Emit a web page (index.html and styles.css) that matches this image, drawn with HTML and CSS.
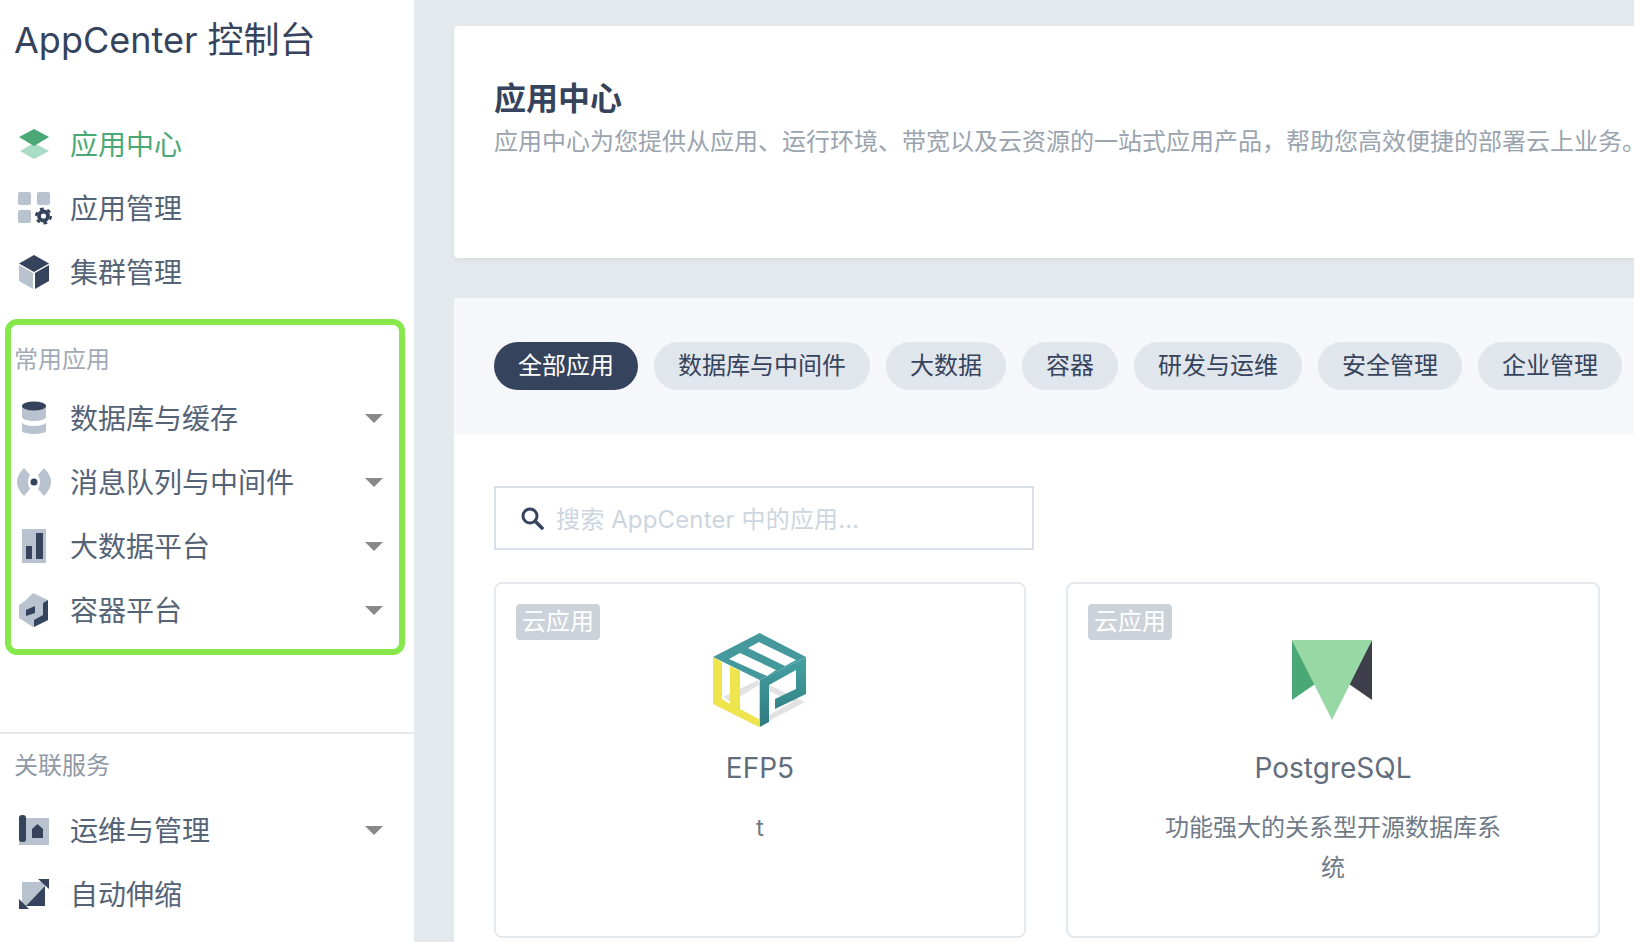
FILE: index.html
```html
<!DOCTYPE html>
<html lang="zh-CN">
<head>
    <meta charset="UTF-8">
    <title>AppCenter 控制台</title>
    <link rel="stylesheet" href="styles.css">
</head>
<body>

    <!-- Sidebar -->
    <aside class="sidebar">
        <h1 class="brand">AppCenter 控制台</h1>

        <nav class="nav-top">
            <a class="item active">
                <svg class="ico" viewBox="0 0 32 32"><path fill="#a8dcc4" d="M2 23 16 15 31 23 16 31z"/><path fill="#4aa876" d="M1 9 16 1 31 9 16 18z"/></svg>
                <span>应用中心</span>
            </a>
            <a class="item">
                <svg class="ico" viewBox="0 0 32 32"><rect width="13" height="13" rx="2" fill="#b8c3cf"/><rect x="19" width="13" height="13" rx="2" fill="#b8c3cf"/><rect y="18" width="13" height="13" rx="2" fill="#b8c3cf"/><circle cx="25.5" cy="24" r="4.5" fill="none" stroke="#36435c" stroke-width="3.8"/><circle cx="25.5" cy="24" r="7.300" fill="none" stroke="#36435c" stroke-width="2.400" stroke-dasharray="3.800 3.840"/></svg>
                <span>应用管理</span>
            </a>
            <a class="item">
                <svg class="ico" viewBox="0 0 32 32"><path fill="#36435c" d="M16-1 31 7.5 16 16 1 7.5z"/><path fill="#b8c3cf" d="M1 9 15 17V33L1 25z"/><path fill="#36435c" d="M17 17 31 9V25L17 33z"/></svg>
                <span>集群管理</span>
            </a>
        </nav>

        <section class="group-hl">
            <div class="label">常用应用</div>
            <a class="item">
                <svg class="ico" viewBox="0 0 32 32"><path fill="#b8c3cf" d="M4 4V15A12 4 0 0 0 28 15V4z"/><ellipse cx="16" cy="4" rx="12" ry="4.500" fill="#36435c"/><path fill="#b8c3cf" d="M4 20A12 4 0 0 0 28 20V29A12 3 0 0 1 4 29z"/></svg>
                <span>数据库与缓存</span><i class="caret"></i>
            </a>
            <a class="item">
                <svg class="ico" viewBox="0 0 32 32"><path fill="#b8c3cf" d="M6 2Q-8 16 6 30L12 23Q8 16 12 9z"/><path fill="#b8c3cf" d="M26 2Q40 16 26 30L20 23Q24 16 20 9z"/><circle cx="16" cy="16" r="3.5" fill="#36435c"/></svg>
                <span>消息队列与中间件</span><i class="caret"></i>
            </a>
            <a class="item">
                <svg class="ico" viewBox="0 0 32 32"><rect x="4" y="-1" width="24" height="34" fill="#b8c3cf"/><rect x="8" y="16" width="6" height="13" fill="#36435c"/><rect x="18" y="3" width="7" height="26" fill="#36435c"/></svg>
                <span>大数据平台</span><i class="caret"></i>
            </a>
            <a class="item">
                <svg class="ico" viewBox="0 0 32 32"><path fill="#b8c3cf" d="M1 11 7 7 15-1 30 6V26L15 33 1 24z"/><path fill="#36435c" d="M30 6 25 9V21L16 26V33L30 26z"/><path fill="#36435c" d="M8 16 17 12V19L8 22z"/></svg>
                <span>容器平台</span><i class="caret"></i>
            </a>
        </section>

        <section class="group-rel">
            <div class="label rel">关联服务</div>
            <a class="item">
                <svg class="ico" viewBox="0 0 32 32"><rect x="1" y="4" width="30" height="27" fill="#b8c3cf"/><rect x="1" y="1" width="7" height="27" rx="3" fill="#36435c"/><path fill="#36435c" d="M14 15 19.500 10 25 15V24H14z"/></svg>
                <span>运维与管理</span><i class="caret"></i>
            </a>
            <a class="item">
                <svg class="ico" viewBox="0 0 32 32"><rect x="4" y="4" width="23" height="24" fill="#b8c3cf"/><path fill="#36435c" d="M27 8V28H8z"/><path fill="#36435c" d="M20 1H31V11z"/><path fill="#36435c" d="M1 21V31H11z"/></svg>
                <span>自动伸缩</span>
            </a>
        </section>
    </aside>

    <!-- Main -->
    <main class="main">
        <div class="head-card">
            <h2>应用中心</h2>
            <p>应用中心为您提供从应用、运行环境、带宽以及云资源的一站式应用产品&#xFF0C;帮助您高效便捷的部署云上业务。</p>
        </div>

        <div class="panel">
            <div class="filters">
                <span class="pill on">全部应用</span>
                <span class="pill">数据库与中间件</span>
                <span class="pill">大数据</span>
                <span class="pill">容器</span>
                <span class="pill">研发与运维</span>
                <span class="pill">安全管理</span>
                <span class="pill">企业管理</span>
            </div>

            <div class="content">
                <div class="search">
                    <svg class="search-ico" viewBox="0 0 24 24"><circle cx="10" cy="10" r="7" fill="none" stroke="#36435c" stroke-width="3"/><path d="M15 15 22 22" stroke="#36435c" stroke-width="3.600" stroke-linecap="round"/></svg>
                    <input type="text" placeholder="搜索 AppCenter 中的应用...">
                </div>

                <div class="cards">
                    <div class="card">
                        <span class="tag">云应用</span>
                        <svg class="logo-efp" viewBox="0 0 94 94">
                            <defs><linearGradient id="teal" x1="0" y1="0" x2="0" y2="1"><stop offset="0" stop-color="#46a2a3"/><stop offset="1" stop-color="#2e7a80"/></linearGradient></defs>
                            <path fill="#e2e2e2" d="M10 64 45 47 46 52 18 69zM56 52 92 69 56 88V82L80 69 56 58z"/>
                            <path fill="#45999c" fill-rule="evenodd" d="M46.700 0 93 24 46.700 47 0 24zM35 15 46 9 83 27 72 33zM16 26 27 20 63 37 54 43z"/>
                            <path fill="url(#teal)" d="M46.700 47 93 24V61L62 76V66L83 56V37L56 52V89L46.700 94z"/>
                            <path fill="#eee44e" d="M0 24 9 29V66L17 71V33L27 38V76L46 86V94L0 71z"/>
                        </svg>
                        <div class="name">EFP5</div>
                        <p class="desc">t</p>
                    </div>
                    <div class="card">
                        <span class="tag">云应用</span>
                        <svg class="logo-pg" viewBox="0 0 80 80">
                            <path fill="#4aa876" d="M0 0 23 44 0 60z"/>
                            <path fill="#3e3f4a" d="M80 0 57 44 80 60z"/>
                            <path fill="#98d8a4" d="M0 0H80L40 80z"/>
                        </svg>
                        <div class="name">PostgreSQL</div>
                        <p class="desc">功能强大的关系型开源数据库系统</p>
                    </div>
                </div>
            </div>
        </div>
    </main>

</body>
</html>
```

FILE: styles.css
```css
* {
    box-sizing: border-box;
}
html, body {
    margin: 0;
    height: 942px;
    overflow: hidden;
}
body {
    display: flex;
    background: #e4e9ee;
    color: #36435c;
    font-family: "Inter", "Noto Sans CJK SC", sans-serif;
}
.sidebar {
    flex: 0 0 414px;
    height: 942px;
    background: #fff;
}
.brand {
    margin: 0;
    height: 112px;
    padding: 14px 0 0 14px;
    font-size: 36px;
    line-height: 52px;
    font-weight: 400;
    color: #36435c;
}
.item {
    display: flex;
    align-items: center;
    height: 64px;
    padding: 0 31px 0 18px;
    font-size: 28px;
    color: #556377;
}
.item span {
    margin-left: 20px;
    padding-bottom: 2px;
    flex: 1;
}
.item.active {
    color: #4aa876;
}
.ico {
    flex: 0 0 32px;
    width: 32px;
    height: 32px;
    overflow: visible;
}
.caret {
    width: 0;
    height: 0;
    border-left: 9px solid transparent;
    border-right: 9px solid transparent;
    border-top: 9px solid #888;
}
.group-hl {
    width: 400px;
    height: 336px;
    margin: 15px 0 0 5px;
    padding: 15px 0 0;
    border: 6px solid #86e84a;
    border-radius: 12px;
}
.group-hl .item {
    padding: 0 16px 0 7px;
}
.label {
    height: 46px;
    padding-left: 3px;
    font-size: 24px;
    line-height: 40px;
    color: #a2abb5;
}
.group-rel {
    margin-top: 77px;
    padding-top: 12px;
    border-top: 2px solid #e4e9ee;
}
.label.rel {
    height: 52px;
    padding-left: 14px;
    color: #8f99a5;
}
.main {
    flex: 0 0 1220px;
    padding: 26px 0 0 40px;
}
.head-card {
    width: 1300px;
    height: 232px;
    padding: 53px 40px 0;
    background: #fff;
    border-radius: 4px;
    box-shadow: 0 2px 4px rgba(54, 67, 92, 0.08);
}
.head-card h2 {
    margin: 0;
    font-size: 32px;
    line-height: 40px;
    font-weight: 700;
    color: #36435c;
}
.head-card p {
    margin: 3px 0 0;
    font-size: 24px;
    line-height: 40px;
    color: #9aa4af;
    white-space: nowrap;
}
.panel {
    width: 1300px;
    height: 644px;
    margin-top: 40px;
    background: #fff;
}
.filters {
    display: flex;
    gap: 16px;
    height: 136px;
    padding: 44px 40px 0;
    background: #f5f7fa;
}
.pill {
    height: 48px;
    padding: 0 24px;
    border-radius: 24px;
    background: #e1e6ec;
    font-size: 24px;
    line-height: 48px;
    color: #36435c;
}
.pill.on {
    background: #36435c;
    color: #fff;
}
.content {
    padding: 52px 40px 0;
}
.search {
    display: flex;
    align-items: center;
    width: 540px;
    height: 64px;
    padding-left: 24px;
    border: 2px solid #d9e0e7;
}
.search-ico {
    width: 24px;
    height: 24px;
}
.search input {
    flex: 1;
    min-width: 0;
    margin-left: 10px;
    padding: 2px 0 0 2px;
    border: none;
    outline: none;
    background: none;
    font: inherit;
    font-size: 24px;
    letter-spacing: 0.14px;
}
.search input::placeholder {
    color: #ccd6e0;
    opacity: 1;
}
.cards {
    display: grid;
    grid-template-columns: 532px 534px;
    gap: 40px;
    margin-top: 32px;
}
.card {
    position: relative;
    display: flex;
    flex-direction: column;
    align-items: center;
    height: 356px;
    border: 2px solid #e4e9ee;
    border-radius: 8px;
}
.tag {
    position: absolute;
    left: 20px;
    top: 20px;
    height: 36px;
    padding: 0 6px;
    border-radius: 4px;
    background: #ccd2d9;
    font-size: 24px;
    line-height: 36px;
    color: #fff;
}
.logo-efp {
    width: 94px;
    height: 94px;
    margin-top: 49px;
}
.logo-pg {
    width: 80px;
    height: 80px;
    margin-top: 56px;
    margin-bottom: 7px;
    margin-right: 2px;
}
.name {
    margin-top: 21px;
    font-size: 28px;
    line-height: 40px;
    color: #626d7c;
}
.desc {
    width: 350px;
    margin: 20px 0 0;
    font-size: 24px;
    line-height: 40px;
    text-align: center;
    color: #6f7a87;
}
```
